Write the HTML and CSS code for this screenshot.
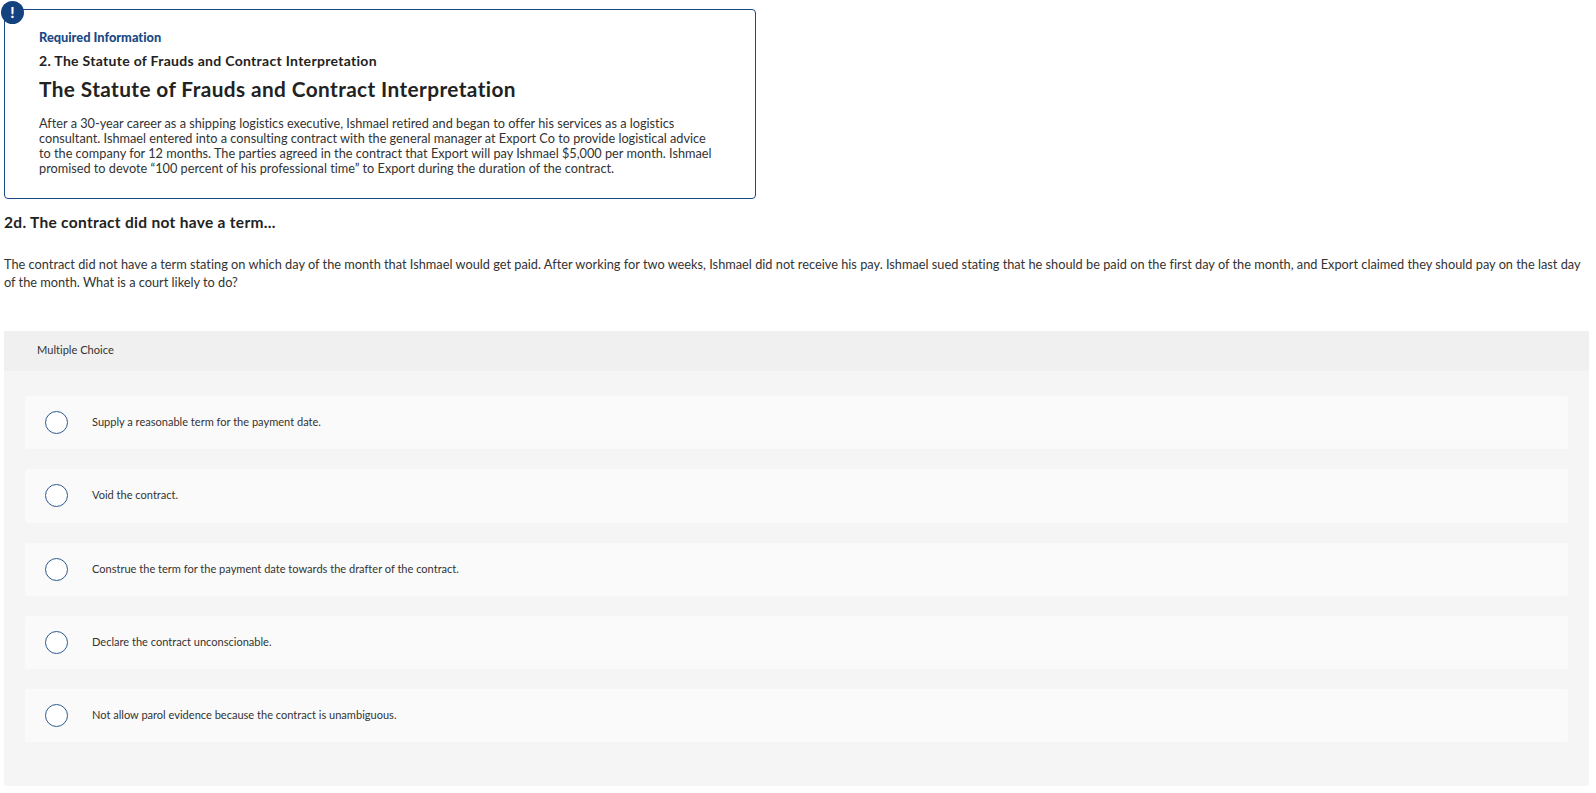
FILE: index.html
```html
<!DOCTYPE html>
<html lang="en">
<head>
<meta charset="utf-8">
<title>Required Information</title>
<link rel="stylesheet" href="styles.css">
</head>
<body>
<main class="page">
  <section class="info">
    <span class="badge">!</span>
    <h4 class="eyebrow">Required Information</h4>
    <h3 class="subhead">2. The Statute of Frauds and Contract Interpretation</h3>
    <h2 class="title">The Statute of Frauds and Contract Interpretation</h2>
    <p class="story">After a 30-year career as a shipping logistics executive, Ishmael retired and began to offer his services as a logistics<br>consultant. Ishmael entered into a consulting contract with the general manager at Export Co to provide logistical advice<br>to the company for 12 months. The parties agreed in the contract that Export will pay Ishmael $5,000 per month. Ishmael<br>promised to devote “100 percent of his professional time” to Export during the duration of the contract.</p>
  </section>
  <h3 class="question-title">2d. The contract did not have a term...</h3>
  <p class="question">The contract did not have a term stating on which day of the month that Ishmael would get paid. After working for two weeks, Ishmael did not receive his pay. Ishmael sued stating that he should be paid on the first day of the month, and Export claimed they should pay on the last day of the month. What is a court likely to do?</p>
  <section class="panel">
    <header class="panel-head">Multiple Choice</header>
    <ul class="choices">
      <li class="choice"><span class="radio"></span><span class="label">Supply a reasonable term for the payment date.</span></li>
      <li class="choice"><span class="radio"></span><span class="label">Void the contract.</span></li>
      <li class="choice"><span class="radio"></span><span class="label">Construe the term for the payment date towards the drafter of the contract.</span></li>
      <li class="choice"><span class="radio"></span><span class="label">Declare the contract unconscionable.</span></li>
      <li class="choice"><span class="radio"></span><span class="label">Not allow parol evidence because the contract is unambiguous.</span></li>
    </ul>
  </section>
</main>
</body>
</html>
```
FILE: styles.css
```css
* { box-sizing: border-box; }
html, body { margin: 0; background: #fff; }
body { font-family: "Lato", "Liberation Sans", sans-serif; color: #2b2b2b; font-variant-ligatures: none; }
.page { padding: 9px 7px 0 4px; height: 793px; overflow: hidden; }
.info { position: relative; width: 752px; height: 190px; border: 1px solid #1b4a84; border-radius: 4px; padding: 20px 30px 0 34px; }
.badge { position: absolute; left: -4px; top: -9px; width: 23px; height: 23px; border-radius: 50%; background: #14427f; color: #fff; font-weight: 900; font-size: 15px; line-height: 23px; text-align: center; }
.eyebrow { margin: 0; font-size: 12.8px; line-height: 15px; font-weight: 900; color: #1b4a84; }
.subhead { margin: 8px 0 0; font-size: 14px; line-height: 16px; font-weight: 700; letter-spacing: .3px; color: #222; }
.title { margin: 8px 0 0; font-size: 20.8px; line-height: 24px; font-weight: 700; letter-spacing: .4px; color: #222; }
.story { margin: 15px 0 0; font-size: 12.72px; line-height: 15px; color: #333; white-space: nowrap; }
.question-title { margin: 14px 0 0; font-size: 15.5px; line-height: 18px; font-weight: 700; letter-spacing: .3px; color: #222; }
.question { margin: 24px 0 0; font-size: 12.77px; line-height: 18px; color: #333; }
.panel { margin-top: 40px; height: 455px; background: #f5f5f5; border-radius: 2px; }
.panel-head { height: 40px; padding-left: 33px; background: #f0f0f0; font-size: 11.1px; line-height: 38px; color: #333; }
.choices { list-style: none; margin: 0; padding: 25px 21px 0; display: flex; flex-direction: column; gap: 20px; }
.choice { display: flex; align-items: center; height: 53.3px; background: #fafafa; border-radius: 2px; padding-left: 20px; }
.radio { flex: none; width: 23px; height: 23px; border: 1.5px solid #2b5a8f; border-radius: 50%; background: #fff; }
.label { margin-left: 24px; font-size: 11.05px; color: #333; position: relative; top: -1px; }
```
